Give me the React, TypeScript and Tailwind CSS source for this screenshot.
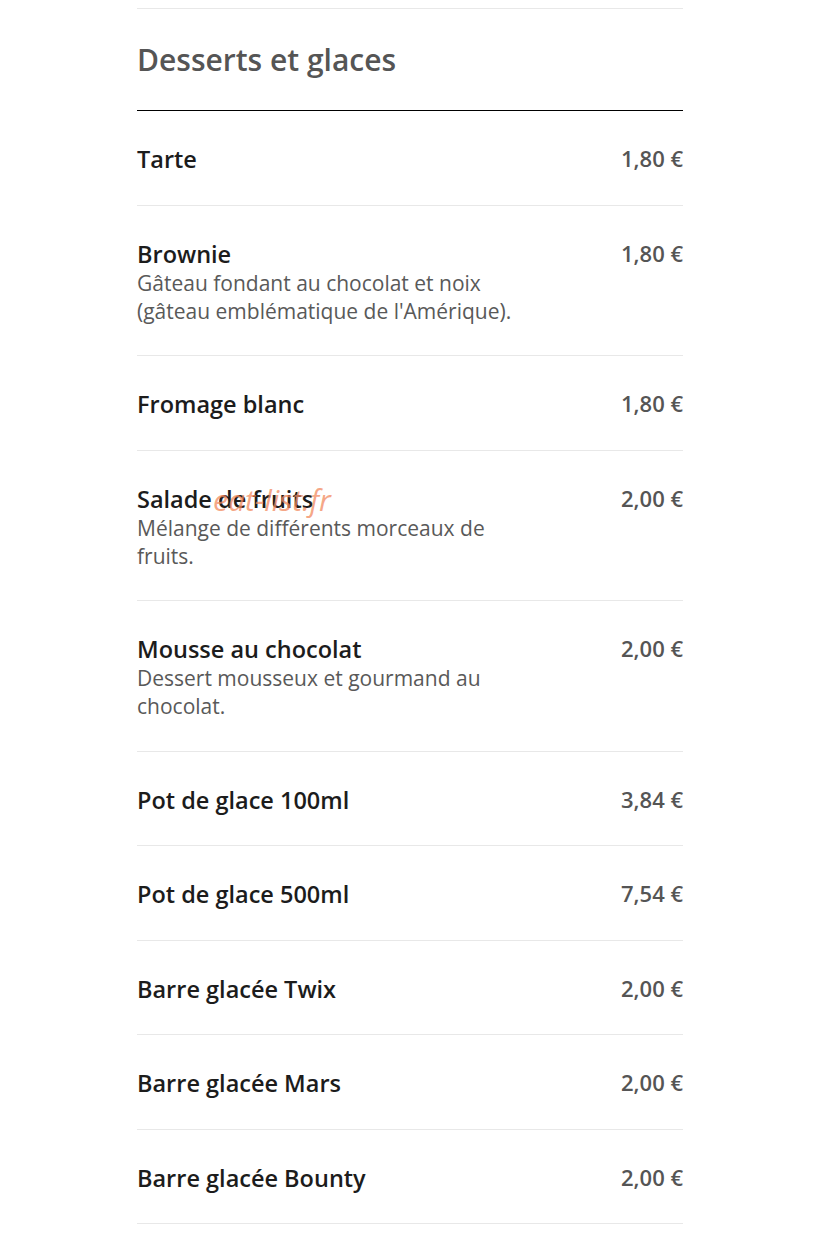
const items = [
  { name: 'Tarte', price: '1,80 €' },
  {
    name: 'Brownie',
    price: '1,80 €',
    desc: "Gâteau fondant au chocolat et noix (gâteau emblématique de l'Amérique).",
  },
  { name: 'Fromage blanc', price: '1,80 €' },
  { name: 'Salade de fruits', price: '2,00 €', desc: 'Mélange de différents morceaux de fruits.', mark: true },
  { name: 'Mousse au chocolat', price: '2,00 €', desc: 'Dessert mousseux et gourmand au chocolat.' },
  { name: 'Pot de glace 100ml', price: '3,84 €' },
  { name: 'Pot de glace 500ml', price: '7,54 €' },
  { name: 'Barre glacée Twix', price: '2,00 €' },
  { name: 'Barre glacée Mars', price: '2,00 €' },
  { name: 'Barre glacée Bounty', price: '2,00 €' },
];

export default function App() {
  return (
    <div className="min-h-screen bg-white pt-2 font-['Open_Sans',sans-serif]">
      <div className="mx-auto w-[546px] translate-x-[-4px]">
        {/* Section header */}
        <div className="border-t border-[#e8e8e8]">
          <h2 className="pt-[31px] pb-[30px] text-[30px] leading-[40px] font-semibold text-[#555555]">
            Desserts et glaces
          </h2>
        </div>
        <div className="border-t border-black" />

        {/* Items */}
        <ul>
          {items.map((item) => (
            <li
              key={item.name}
              className="relative flex justify-between border-b border-[#e8e8e8] pt-[33px] pb-[30.5px]"
            >
              <div className="w-[395px]">
                <h3 className="text-[23.5px] leading-[30px] font-semibold text-[#1c1c1c]">{item.name}</h3>
                {item.desc && (
                  <p className="text-[21px] leading-[28px] text-[#595959]">{item.desc}</p>
                )}
              </div>
              <span className="text-[22px] leading-[28px] font-semibold text-[#555555]">{item.price}</span>
              {item.mark && (
                <span className="pointer-events-none absolute left-[76px] top-[34px] text-[30px] leading-[30px] italic text-[#f28a60]/75">
                  eat-list.fr
                </span>
              )}
            </li>
          ))}
        </ul>
      </div>
    </div>
  );
}
